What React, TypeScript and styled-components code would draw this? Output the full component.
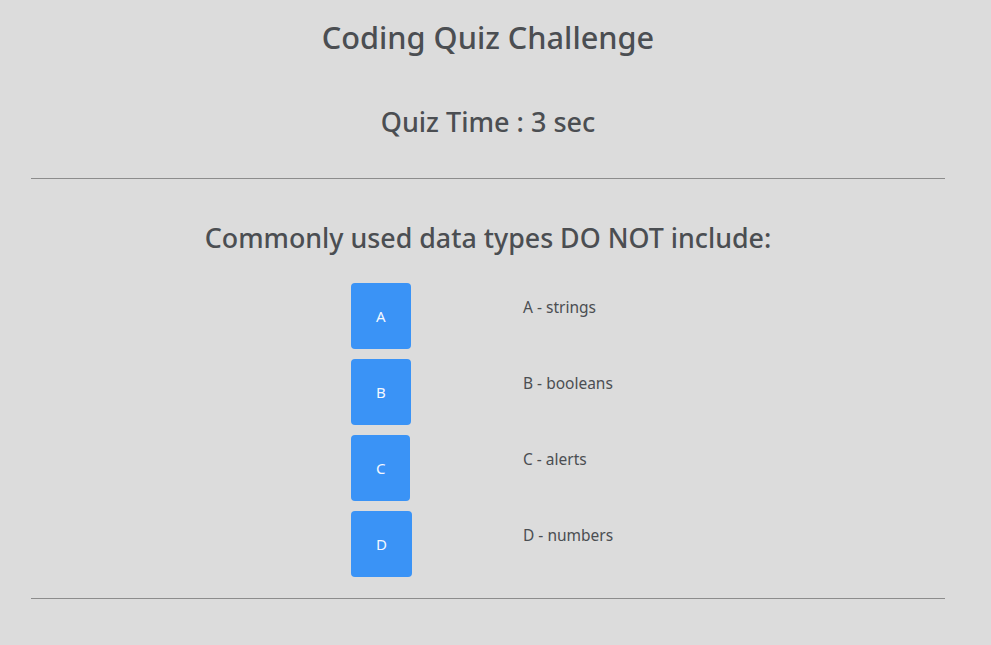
import React from "react";
import styled, { createGlobalStyle } from "styled-components";

const Global = createGlobalStyle`
  html, body { margin: 0; padding: 0; background: #dcdcdc; }
  body { font-family: "Noto Sans", "Open Sans", sans-serif; color: #4b4e52; }
`;

const Page = styled.main`
  margin: 0 46px 0 31px;
  display: flex;
  flex-direction: column;
`;

const Title = styled.h1`
  margin: 17px 0 0;
  font-size: 30.7px;
  line-height: 40px;
  font-weight: 500;
  text-align: center;
`;

const Timer = styled.h2`
  margin: 48px 0 0;
  font-size: 27px;
  line-height: 34px;
  font-weight: 500;
  text-align: center;
`;

const Rule = styled.hr<{ $top: number }>`
  margin: ${(p) => p.$top}px 0 0;
  border: 0;
  height: 1px;
  background: #8c8c8c;
  width: 100%;
`;

const Question = styled.h2`
  margin: 42px 0 0;
  font-size: 26.8px;
  line-height: 34px;
  font-weight: 500;
  text-align: center;
`;

const Choices = styled.div`
  margin-top: 28px;
  padding-left: 320px;
  display: grid;
  grid-template-columns: 172px 1fr;
  row-gap: 10px;
`;

const ChoiceButton = styled.button`
  height: 66px;
  padding: 0 25px;
  justify-self: start;
  border: 0;
  border-radius: 4px;
  background: #3a93f6;
  color: #f4f8ff;
  font-family: "Noto Sans", "Open Sans", sans-serif;
  font-size: 15px;
  font-weight: 400;
`;

const ChoiceLabel = styled.div`
  padding-top: 14px;
  font-size: 15.5px;
  line-height: 20px;
  font-weight: 400;
`;

const choices = [
  { key: "A", text: "strings" },
  { key: "B", text: "booleans" },
  { key: "C", text: "alerts" },
  { key: "D", text: "numbers" },
];

export default function App() {
  return (
    <>
      <Global />
      <Page>
        <Title>Coding Quiz Challenge</Title>
        <Timer>Quiz Time : 3 sec</Timer>
        <Rule $top={39} />
        <Question>Commonly used data types DO NOT include:</Question>
        <Choices>
          {choices.map((c) => (
            <React.Fragment key={c.key}>
              <ChoiceButton>{c.key}</ChoiceButton>
              <ChoiceLabel>
                {c.key} - {c.text}
              </ChoiceLabel>
            </React.Fragment>
          ))}
        </Choices>
        <Rule $top={21} />
      </Page>
    </>
  );
}
